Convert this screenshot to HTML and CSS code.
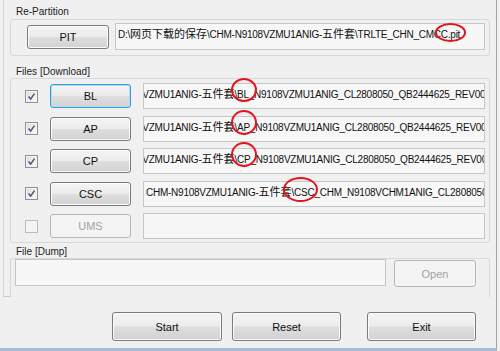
FILE: index.html
```html
<!DOCTYPE html>
<html lang="zh-cn">
<head>
  <meta charset="UTF-8">
  <title>Odin - Re-Partition</title>
  <link rel="stylesheet" href="styles.css">
</head>
<body>
  <div class="window">
    <div class="panel">
      <div class="group-label">Re-Partition</div>
      <div class="group group-pit">
        <button class="btn btn-pit">PIT</button>
        <div class="field field-pit"><span class="txt">D:\<span class="cn">网页下载的保存</span>\CHM-N9108VZMU1ANIG-<span class="cn">五件套</span>\TRLTE_CHN_CMCC.pit</span></div>
      </div>

      <div class="group-label label-files">Files [Download]</div>
      <div class="group group-files">
        <span class="check on"><svg viewBox="0 0 13 13"><path d="M3 6.5 L5.5 9.5 L10 3"/></svg></span>
        <button class="btn focus">BL</button>
        <div class="field"><span class="txt shift">8VZMU1ANIG-<span class="cn">五件套</span>\BL_N9108VZMU1ANIG_CL2808050_QB2444625_REV00_user_low_ship.tar.md5</span></div>

        <span class="check on"><svg viewBox="0 0 13 13"><path d="M3 6.5 L5.5 9.5 L10 3"/></svg></span>
        <button class="btn">AP</button>
        <div class="field"><span class="txt shift">8VZMU1ANIG-<span class="cn">五件套</span>\AP_N9108VZMU1ANIG_CL2808050_QB2444625_REV00_user_low_ship.tar.md5</span></div>

        <span class="check on"><svg viewBox="0 0 13 13"><path d="M3 6.5 L5.5 9.5 L10 3"/></svg></span>
        <button class="btn">CP</button>
        <div class="field"><span class="txt shift">8VZMU1ANIG-<span class="cn">五件套</span>\CP_N9108VZMU1ANIG_CL2808050_QB2444625_REV00_user_low_ship.tar.md5</span></div>

        <span class="check on"><svg viewBox="0 0 13 13"><path d="M3 6.5 L5.5 9.5 L10 3"/></svg></span>
        <button class="btn">CSC</button>
        <div class="field"><span class="txt">CHM-N9108VZMU1ANIG-<span class="cn">五件套</span>\CSC_CHM_N9108VCHM1ANIG_CL2808050_QB2444625_REV00.tar.md5</span></div>

        <span class="check off"></span>
        <button class="btn" disabled>UMS</button>
        <div class="field"></div>
      </div>

      <div class="group-label label-dump">File [Dump]</div>
      <div class="group group-dump">
        <div class="field field-dump"></div>
        <button class="btn btn-open" disabled>Open</button>
      </div>
    </div>

    <div class="actions">
      <button class="btn btn-start">Start</button>
      <button class="btn btn-reset">Reset</button>
      <button class="btn btn-exit">Exit</button>
    </div>

    <span class="mark mark-pit"></span>
    <span class="mark mark-bl"></span>
    <span class="mark mark-ap"></span>
    <span class="mark mark-cp"></span>
    <span class="mark mark-csc"></span>
  </div>
</body>
</html>
```

FILE: styles.css
```css
body {
  margin: 0;
  background-color: #f0f0f0;
  font-family: "Liberation Sans", Arial, "Noto Sans CJK SC", sans-serif;
  color: #1a1a1a;
}

.window {
  position: relative;
  width: 496px;
  height: 348px;
  border-right: 1px solid #a3a3a3;
  border-bottom: 3px solid #a9bcd6;
  overflow: hidden;
}

.panel {
  width: 474px;
  margin-left: 3px;
  padding: 6px 0 0 6px;
  height: 290px;
  border-left: 1px solid #d6d6d6;
  border-bottom: 1px solid #c9c9c9;
}

.group-label {
  font-size: 10px;
  line-height: 12px;
  height: 12px;
  padding-left: 6px;
  color: #222;
  margin-bottom: 1px;
}

.label-files {
  margin-top: 10px;
  margin-bottom: 0;
}

.label-dump {
  margin-top: 3px;
  line-height: 11px;
  height: 12px;
  margin-bottom: 0;
}

.group {
  box-sizing: border-box;
  width: 480px;
  border: 1px solid #d5d9dc;
  border-radius: 3px;
  background-color: #f0f0f0;
}

.group-pit {
  display: flex;
  align-items: center;
  padding: 3px 0 5px 16px;
}

.group-files {
  display: grid;
  grid-template-columns: 13px 81px 342px;
  grid-auto-rows: 26px;
  column-gap: 12px;
  row-gap: 6.5px;
  align-items: center;
  padding: 4px 0 3px 14px;
}

.group-dump {
  display: flex;
  align-items: flex-start;
  height: 39px;
  padding: 0 0 0 4px;
  border-bottom: none;
  border-radius: 3px 3px 0 0;
}

.btn {
  box-sizing: border-box;
  height: 24px;
  padding: 0;
  font-family: "Liberation Sans", Arial, sans-serif;
  font-size: 11px;
  color: #111;
  border: 1px solid #7b7b7b;
  border-radius: 3px;
  background: linear-gradient(#f4f4f4 0%, #ececec 48%, #dedede 52%, #d2d2d2 100%);
  box-shadow: inset 0 0 0 1px #fbfbfb;
}

.btn.focus {
  border-color: #3d9ad6;
  box-shadow: inset 0 0 0 1px #a9def7;
}

.btn:disabled {
  color: #a2a2a2;
  border-color: #b5b8ba;
  background: #f4f4f4;
  box-shadow: none;
}

.btn-pit {
  width: 82px;
  margin-right: 6px;
}

.field {
  box-sizing: border-box;
  height: 26px;
  border: 1px solid #c6c6c6;
  background-color: #f7f7f7;
  overflow: hidden;
  white-space: nowrap;
  padding: 3px 0 0 2px;
  font-size: 10px;
  line-height: 12px;
  letter-spacing: -0.25px;
  color: #111;
}

.field-pit {
  width: 370px;
  height: 27px;
  padding-left: 2px;
}

.txt {
  display: inline-block;
}

.shift {
  margin-left: -9px;
}

.cn {
  font-family: "Noto Sans CJK SC", sans-serif;
  font-size: 11px;
  letter-spacing: 0;
}

.check {
  box-sizing: border-box;
  width: 13px;
  height: 13px;
  border: 1px solid #8e8f8f;
  background: linear-gradient(135deg, #dcdcdc, #fbfbfb);
  box-shadow: inset 0 0 0 1px #f4f4f4;
}

.check svg {
  display: block;
  width: 11px;
  height: 11px;
  fill: none;
  stroke: #3f5287;
  stroke-width: 1.7;
}

.check.off {
  border-color: #bcbcbc;
  background: #f4f4f4;
}

.field-dump {
  width: 371px;
  height: 27px;
}

.btn-open {
  width: 82px;
  height: 27px;
  margin: 1px 0 0 8px;
}

.actions {
  display: flex;
  padding: 15px 0 0 112px;
}

.actions .btn {
  height: 29px;
  width: 109px;
}

.btn-start {
  width: 110px !important;
  margin-right: 10px;
}

.btn-reset {
  margin-right: 26px;
}

.mark {
  position: absolute;
  box-sizing: border-box;
  border: 2px solid #e2141c;
  border-radius: 50%;
}

.mark-pit { left: 435px; top: 23px; width: 31px; height: 19px; }
.mark-bl { left: 231px; top: 78px; width: 26px; height: 24px; }
.mark-ap { left: 231px; top: 110px; width: 26px; height: 25px; }
.mark-cp { left: 231px; top: 142px; width: 26px; height: 25px; }
.mark-csc { left: 283px; top: 177px; width: 35px; height: 25px; }
```
